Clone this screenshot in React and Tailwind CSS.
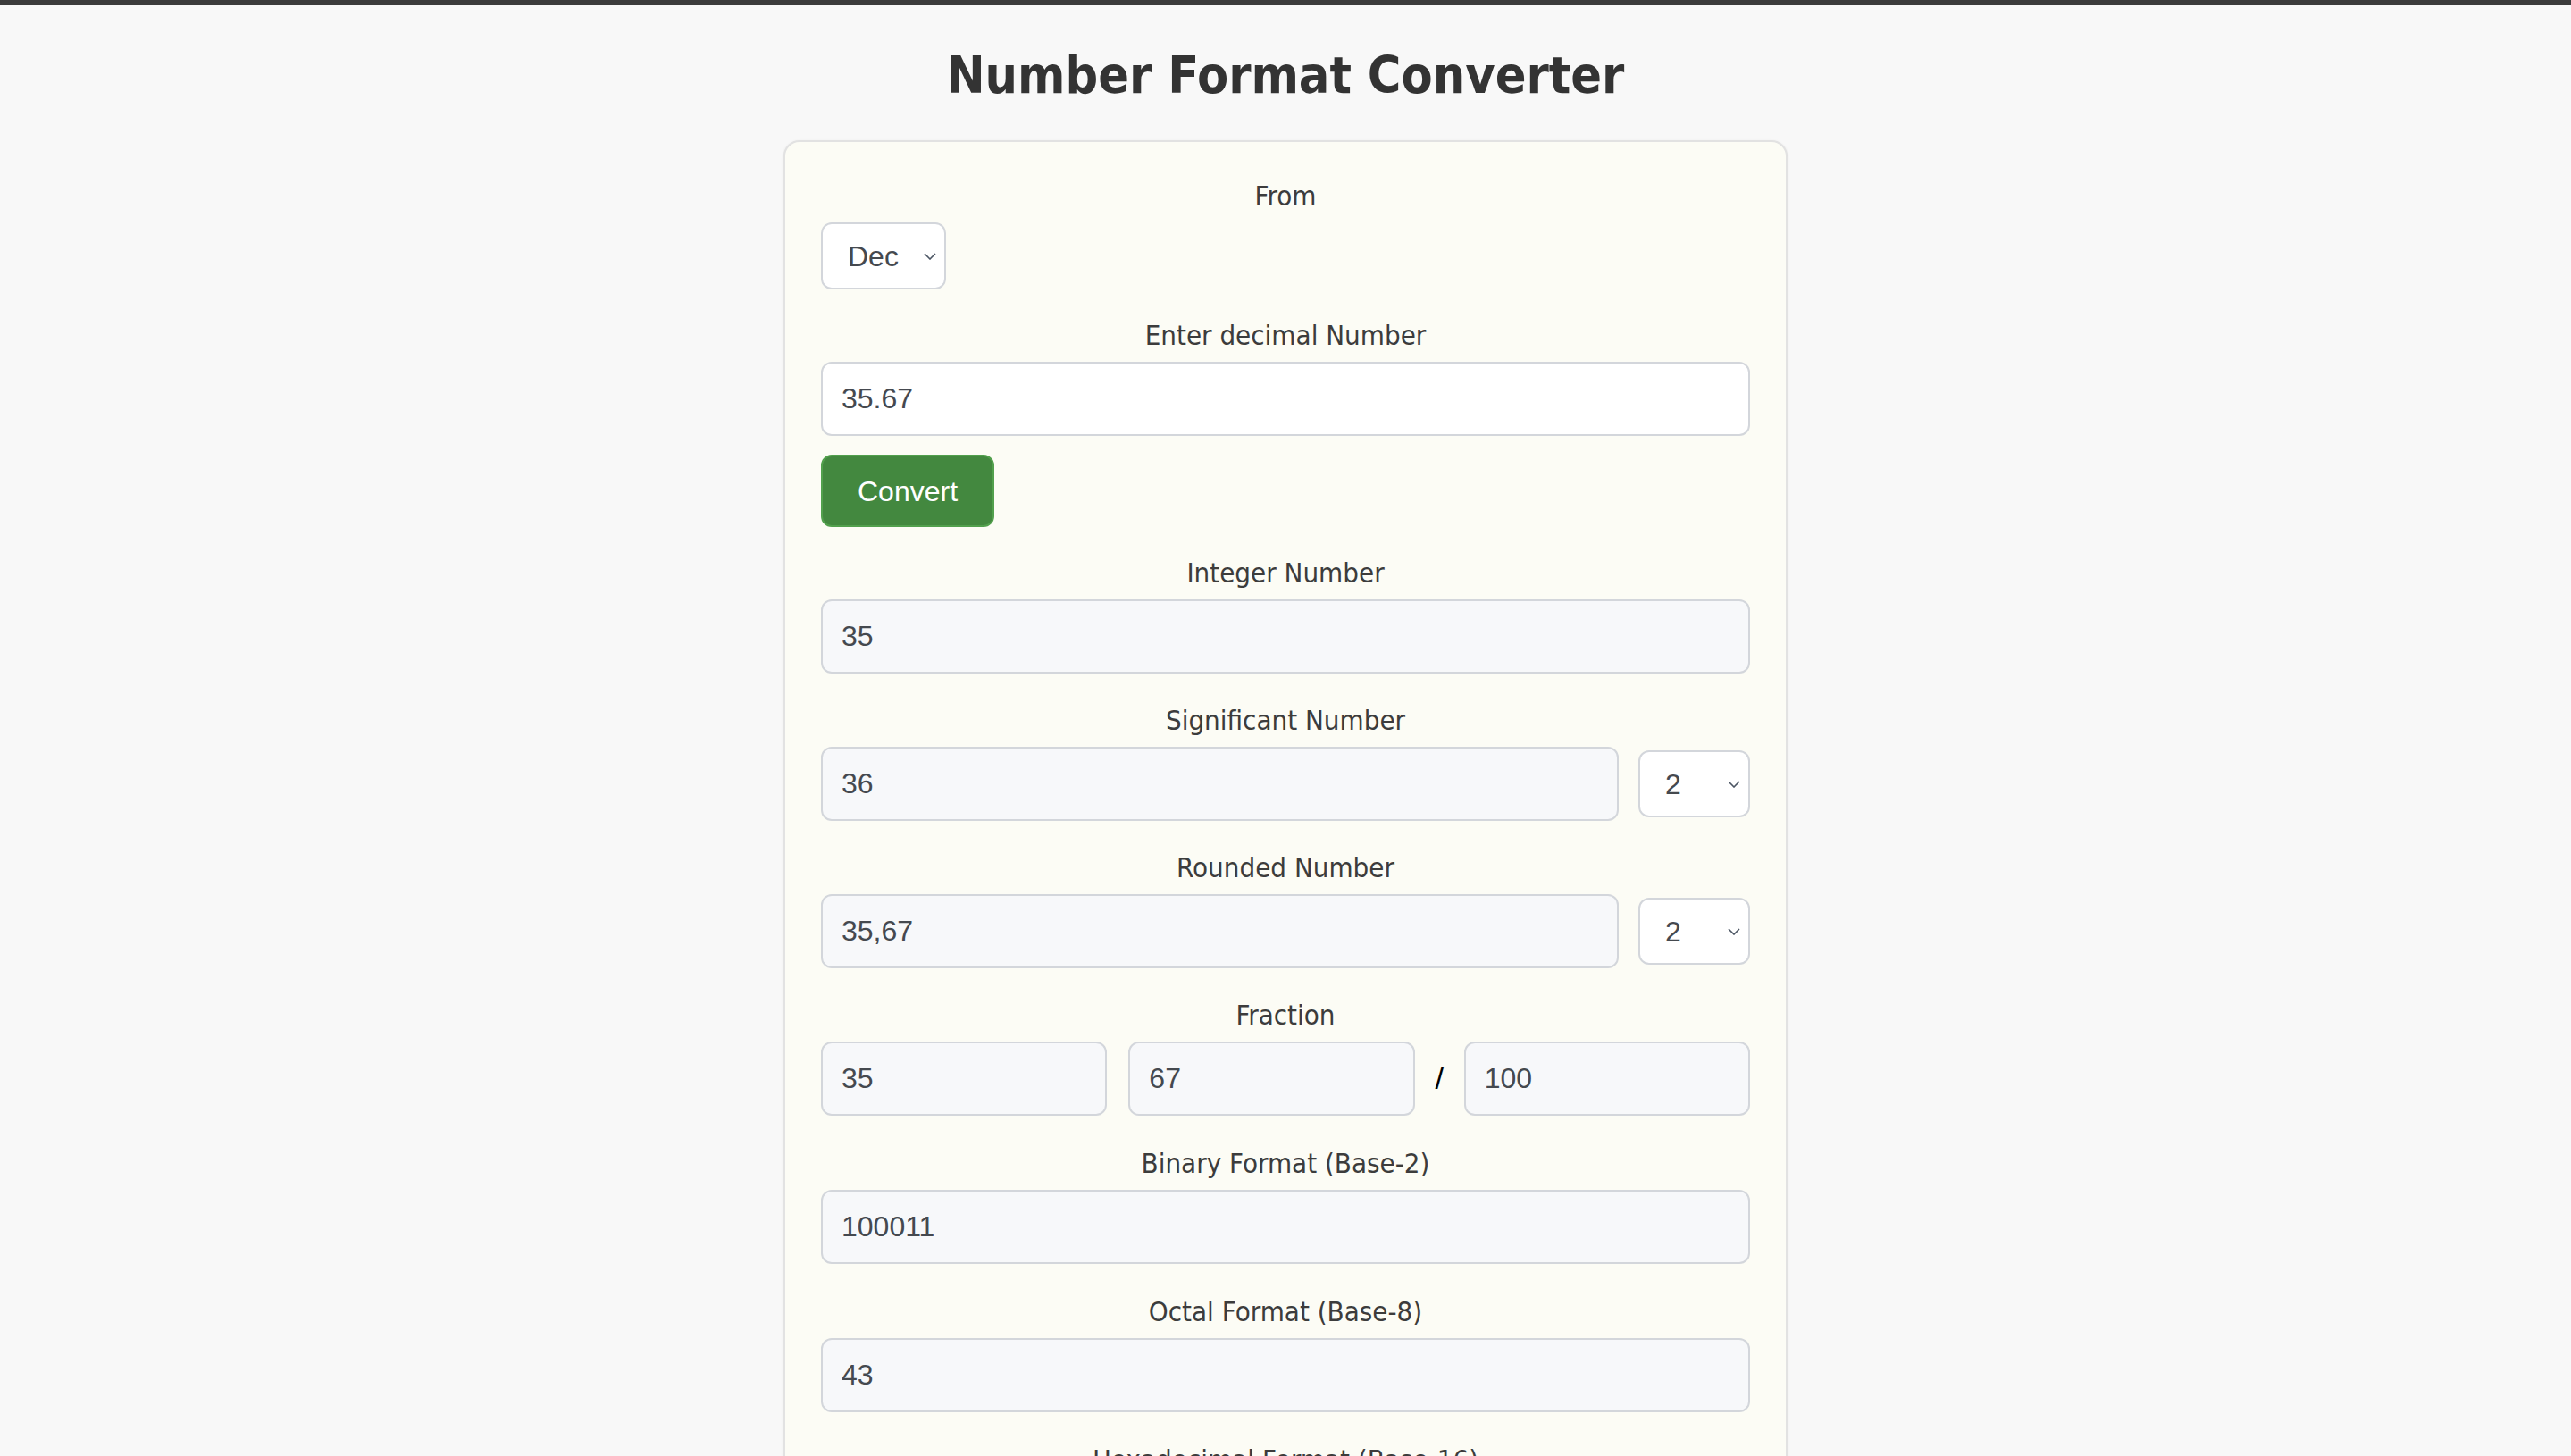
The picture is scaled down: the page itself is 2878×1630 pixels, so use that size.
import React, { useState } from "react";

const labelFont = { fontFamily: '"DejaVu Sans Condensed", "DejaVu Sans", sans-serif', fontStretch: "condensed" };

const Chevron = () => (
    <svg className="w-[14px] h-[8px] text-[#4b5563]" viewBox="0 0 14 8" fill="none" stroke="currentColor" strokeWidth="1.6">
        <path d="M1 1l6 6 6-6" />
    </svg>
);

const Select = ({ value, options, onChange, className }) => (
    <div className={`relative shrink-0 ${className}`}>
        <select
            value={value}
            onChange={(e) => onChange(e.target.value)}
            className="appearance-none w-full h-full bg-white border-2 border-[#d3d6db] rounded-[12px] pl-[28px] text-[32px] text-[#45494f] font-['Liberation_Sans',Arial,sans-serif] outline-none"
        >
            {options.map((o) => (
                <option key={o} value={o}>{o}</option>
            ))}
        </select>
        <span className="absolute right-[11px] top-1/2 -translate-y-1/2 pointer-events-none flex">
            <Chevron />
        </span>
    </div>
);

const Field = ({ value, readOnly = true, onChange, className = "" }) => (
    <input
        value={value}
        readOnly={readOnly}
        onChange={onChange}
        className={`h-[83px] min-w-0 border-2 border-[#d3d6db] rounded-[12px] px-[21px] text-[32px] text-[#45494f] font-['Liberation_Sans',Arial,sans-serif] outline-none ${readOnly ? "bg-[#f7f8fa]" : "bg-white"} ${className}`}
    />
);

const Label = ({ children }) => (
    <label className="block text-center text-[31px] leading-[40px] text-[#3c3c3c] mb-[10px]" style={labelFont}>
        {children}
    </label>
);

export default function App() {
    const [from, setFrom] = useState("Dec");
    const [input, setInput] = useState("35.67");
    const [sig, setSig] = useState("2");
    const [round, setRound] = useState("2");

    return (
        <div className="min-h-screen bg-[#f8f8f8]">
            <div className="h-[6px] bg-[#3c3c3c]" />

            <h1
                className="text-center text-[57px] leading-[59px] font-bold text-[#333333] mt-[49px] mb-[43px]"
                style={labelFont}
            >
                Number Format Converter
            </h1>

            <div className="mx-auto w-[1124px] bg-[#fcfcf5] border-2 border-[#e2e2e2] rounded-[18px] shadow-sm px-[40px] pt-[40px] pb-[60px]">
                {/* From */}
                <Label>From</Label>
                <Select value={from} options={["Dec", "Bin", "Oct", "Hex"]} onChange={setFrom} className="w-[140px] h-[75px] mt-[3px]" />

                {/* Input */}
                <div className="mt-[31px]">
                    <Label>Enter decimal Number</Label>
                    <Field value={input} readOnly={false} onChange={(e) => setInput(e.target.value)} className="w-full bg-white" />
                </div>

                <button className="mt-[21px] h-[81px] px-[39px] bg-[#43883f] border-2 border-[#52a04d] rounded-[12px] text-white text-[32px] font-['Liberation_Sans',Arial,sans-serif]">
                    Convert
                </button>

                <div className="mt-[31px]">
                    <Label>Integer Number</Label>
                    <Field value="35" className="w-full" />
                </div>

                <div className="mt-[32px]">
                    <Label>Significant Number</Label>
                    <div className="flex items-center gap-[22px]">
                        <Field value="36" className="flex-1" />
                        <Select value={sig} options={["1", "2", "3", "4", "5"]} onChange={setSig} className="w-[125px] h-[75px]" />
                    </div>
                </div>

                <div className="mt-[32px]">
                    <Label>Rounded Number</Label>
                    <div className="flex items-center gap-[22px]">
                        <Field value="35,67" className="flex-1" />
                        <Select value={round} options={["1", "2", "3", "4", "5"]} onChange={setRound} className="w-[125px] h-[75px]" />
                    </div>
                </div>

                <div className="mt-[32px]">
                    <Label>Fraction</Label>
                    <div className="flex items-center">
                        <Field value="35" className="flex-1 w-0" />
                        <Field value="67" className="flex-1 w-0 ml-[24px]" />
                        <span className="w-[55px] text-center text-[34px] text-black font-['Liberation_Sans',Arial,sans-serif]">/</span>
                        <Field value="100" className="flex-1 w-0" />
                    </div>
                </div>

                <div className="mt-[33px]">
                    <Label>Binary Format (Base-2)</Label>
                    <Field value="100011" className="w-full" />
                </div>

                <div className="mt-[33px]">
                    <Label>Octal Format (Base-8)</Label>
                    <Field value="43" className="w-full" />
                </div>

                <div className="mt-[33px]">
                    <Label>Hexadecimal Format (Base-16)</Label>
                    <Field value="23" className="w-full" />
                </div>
            </div>
        </div>
    );
}
